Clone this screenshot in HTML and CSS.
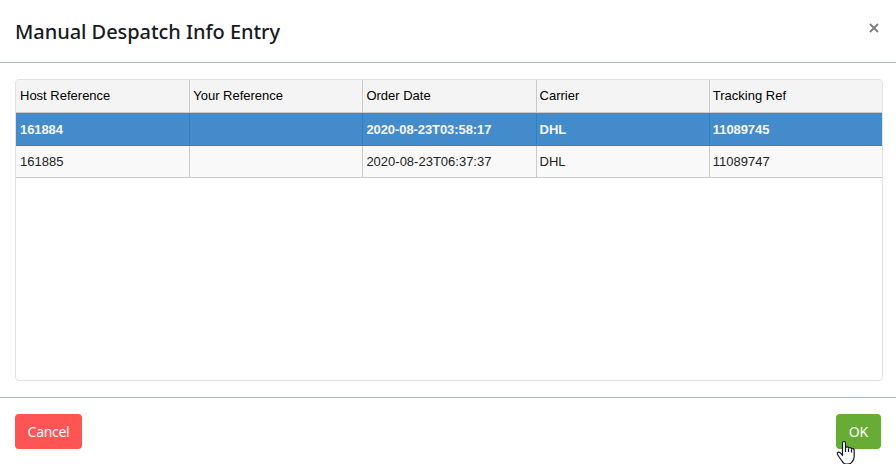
FILE: index.html
```html
<!DOCTYPE html>
<html lang="en">

<head>
    <meta charset="UTF-8">
    <meta name="viewport" content="width=device-width, initial-scale=1.0">
    <title>Manual Despatch Info Entry</title>
    <link rel="stylesheet" href="styles.css">
</head>

<body>
    <div class="modal">
        <div class="modal-header">
            <h1 class="modal-title">Manual Despatch Info Entry</h1>
            <button class="close" aria-label="Close">
                <svg width="10" height="10" viewBox="0 0 10 10">
                    <path d="M1 1L9 9M9 1L1 9" stroke="#808080" stroke-width="2" fill="none" />
                </svg>
            </button>
        </div>

        <div class="modal-body">
            <div class="grid">
                <div class="row head">
                    <div class="cell">Host Reference</div>
                    <div class="cell">Your Reference</div>
                    <div class="cell">Order Date</div>
                    <div class="cell">Carrier</div>
                    <div class="cell">Tracking Ref</div>
                </div>
                <div class="row selected">
                    <div class="cell">161884</div>
                    <div class="cell"></div>
                    <div class="cell">2020-08-23T03:58:17</div>
                    <div class="cell">DHL</div>
                    <div class="cell">11089745</div>
                </div>
                <div class="row">
                    <div class="cell">161885</div>
                    <div class="cell"></div>
                    <div class="cell">2020-08-23T06:37:37</div>
                    <div class="cell">DHL</div>
                    <div class="cell">11089747</div>
                </div>
            </div>
        </div>

        <div class="modal-footer">
            <button class="btn btn-cancel">Cancel</button>
            <button class="btn btn-ok">OK</button>
        </div>
    </div>

    <!-- hand pointer -->
    <svg class="pointer" width="19" height="25" viewBox="0 0 19 25">
        <path d="M6.500 15.500V3Q6.500 1.500 8 1.500Q9.500 1.500 9.500 3V7.500Q12.500 6 12.500 8Q15.500 7 15.500 9Q18.200 8 18.200 10.500V16.500Q18.200 19.500 16 22Q15 24 12 24H10Q7.500 24 6 21L3.500 17.500L1.500 14.500Q1 12.500 2.500 12.200Q4 11.800 6.500 15.500Z" fill="#fff" stroke="#111827" stroke-width="1.200" stroke-linejoin="round" />
        <path d="M9.500 7.500V12M12.500 8.500V12M15.500 9.500V12.500" fill="none" stroke="#111827" stroke-width="1.200" />
    </svg>
</body>

</html>
```
FILE: styles.css
```css
* {
    box-sizing: border-box;
}

body {
    margin: 0;
    height: 464px;
    overflow: hidden;
    background-color: #fff;
    font-family: 'Noto Sans', sans-serif;
}

.modal {
    display: flex;
    flex-direction: column;
    height: 464px;
}

.modal-header {
    display: flex;
    justify-content: space-between;
    height: 63px;
    padding: 16px 17px 0 15px;
    border-bottom: 1px solid #a4b7c1;
}

.modal-title {
    margin: 0;
    font-size: 20px;
    font-weight: 500;
    line-height: 32px;
    letter-spacing: -0.05px;
    color: #151b1e;
}

.close {
    display: flex;
    width: 10px;
    height: 10px;
    margin-top: 7px;
    padding: 0;
    border: none;
    background: none;
}

.modal-body {
    flex: 1;
    padding: 16px 13px 16px 15px;
}

.grid {
    height: 302px;
    overflow: hidden;
    border: 1px solid #e1e1e1;
    border-radius: 4px;
    font-family: 'Liberation Sans', Arial, sans-serif;
    font-size: 13px;
}

.row {
    display: grid;
    grid-template-columns: repeat(5, 1fr);
    height: 32px;
    line-height: 31px;
    border-bottom: 1px solid #cacaca;
    background-color: #f9f9f9;
    color: #222;
}

.cell {
    padding-left: 3px;
    border-left: 1px solid #cacaca;
    white-space: nowrap;
}

.cell:first-child {
    padding-left: 4px;
    border-left: none;
}

.head {
    height: 33px;
    background-color: #f4f4f4;
    color: #000;
}

.selected {
    height: 33px;
    line-height: 33px;
    background-color: #448bcc;
    border-color: #347dc0;
    color: #f4f8fc;
    font-weight: bold;
    letter-spacing: -0.08px;
}

.selected .cell {
    border-color: #347dc0;
}

.modal-footer {
    display: flex;
    justify-content: space-between;
    height: 67px;
    padding: 16px 15px 0;
    border-top: 1px solid #a4b7c1;
}

.btn {
    height: 35px;
    padding: 0;
    border: none;
    border-radius: 4px;
    color: #fff;
    font-family: 'Noto Sans', sans-serif;
    font-size: 14px;
    line-height: 36px;
}

.btn-cancel {
    width: 67px;
    background-color: #ff5454;
    letter-spacing: -0.3px;
}

.btn-ok {
    width: 45px;
    background-color: #67ac35;
}

.pointer {
    position: absolute;
    left: 836px;
    top: 440px;
}
```
